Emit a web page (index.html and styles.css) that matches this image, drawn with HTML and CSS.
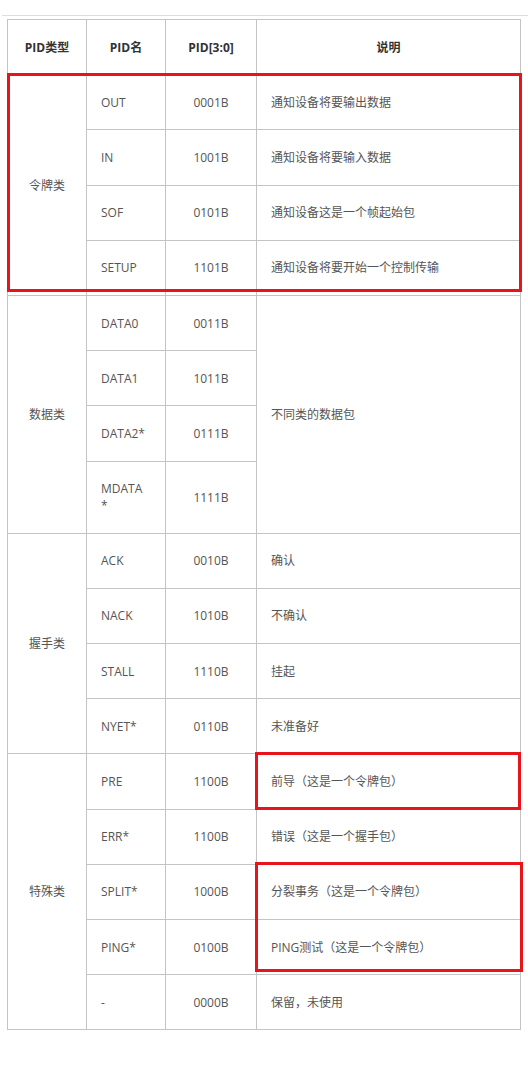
FILE: index.html
```html
<!DOCTYPE html>
<html lang="zh-CN">
<head>
<meta charset="utf-8">
<title>PID</title>
<link rel="stylesheet" href="styles.css">
</head>
<body>
<div class="page">
  <div class="rule"></div>
  <div class="wrap">
    <table class="pid">
      <colgroup>
        <col class="c1"><col class="c2"><col class="c3"><col class="c4">
      </colgroup>
      <thead>
        <tr><th>PID类型</th><th>PID名</th><th>PID[3:0]</th><th>说明</th></tr>
      </thead>
      <tbody>
        <tr><td class="grp" rowspan="4">令牌类</td><td>OUT</td><td class="ctr">0001B</td><td>通知设备将要输出数据</td></tr>
        <tr><td>IN</td><td class="ctr">1001B</td><td>通知设备将要输入数据</td></tr>
        <tr><td>SOF</td><td class="ctr">0101B</td><td>通知设备这是一个帧起始包</td></tr>
        <tr><td>SETUP</td><td class="ctr">1101B</td><td>通知设备将要开始一个控制传输</td></tr>

        <tr><td class="grp" rowspan="4">数据类</td><td>DATA0</td><td class="ctr">0011B</td><td rowspan="4">不同类的数据包</td></tr>
        <tr><td>DATA1</td><td class="ctr">1011B</td></tr>
        <tr><td>DATA2*</td><td class="ctr">0111B</td></tr>
        <tr><td>MDATA<br>*</td><td class="ctr">1111B</td></tr>

        <tr><td class="grp" rowspan="4">握手类</td><td>ACK</td><td class="ctr">0010B</td><td>确认</td></tr>
        <tr><td>NACK</td><td class="ctr">1010B</td><td>不确认</td></tr>
        <tr><td>STALL</td><td class="ctr">1110B</td><td>挂起</td></tr>
        <tr><td>NYET*</td><td class="ctr">0110B</td><td>未准备好</td></tr>

        <tr><td class="grp" rowspan="5">特殊类</td><td>PRE</td><td class="ctr">1100B</td><td>前导（这是一个令牌包）</td></tr>
        <tr><td>ERR*</td><td class="ctr">1100B</td><td>错误（这是一个握手包）</td></tr>
        <tr><td>SPLIT*</td><td class="ctr">1000B</td><td>分裂事务（这是一个令牌包）</td></tr>
        <tr><td>PING*</td><td class="ctr">0100B</td><td>PING测试（这是一个令牌包）</td></tr>
        <tr><td>-</td><td class="ctr">0000B</td><td>保留，未使用</td></tr>
      </tbody>
    </table>
    <div class="mark mark-token"></div>
    <div class="mark mark-pre"></div>
    <div class="mark mark-split"></div>
  </div>
</div>
</body>
</html>
```
FILE: styles.css
```css
html, body {
  margin: 0;
  padding: 0;
  background: #ffffff;
}

.page {
  padding-top: 15px;
  font-family: "Open Sans", "Noto Sans CJK SC", sans-serif;
  font-size: 12px;
  color: #555555;
}

.rule {
  height: 1px;
  background: #dddddd;
  margin-left: 2px;
}

.wrap {
  position: relative;
  margin: 3px 0 0 7px;
  width: 515px;
}

.pid {
  border-collapse: collapse;
  width: 514px;
  table-layout: fixed;
}

.c1 { width: 79px; }
.c2 { width: 79px; }
.c3 { width: 91px; }
.c4 { width: auto; }

.pid th,
.pid td {
  border: 1px solid #c4c4c4;
  padding: 18.6px 14px;
  line-height: 17px;
  text-align: left;
  vertical-align: middle;
}

.pid th {
  text-align: center;
  font-weight: bold;
  color: #333333;
}

.pid td.grp,
.pid td.ctr {
  text-align: center;
}

.mark {
  position: absolute;
  box-sizing: border-box;
  border: 3px solid #e8141c;
  pointer-events: none;
}

.mark-token {
  left: 0;
  top: 54px;
  width: 515px;
  height: 219px;
}

.mark-pre {
  left: 248px;
  top: 733px;
  width: 266px;
  height: 58px;
}

.mark-split {
  left: 248px;
  top: 843px;
  width: 268px;
  height: 110px;
}
```
